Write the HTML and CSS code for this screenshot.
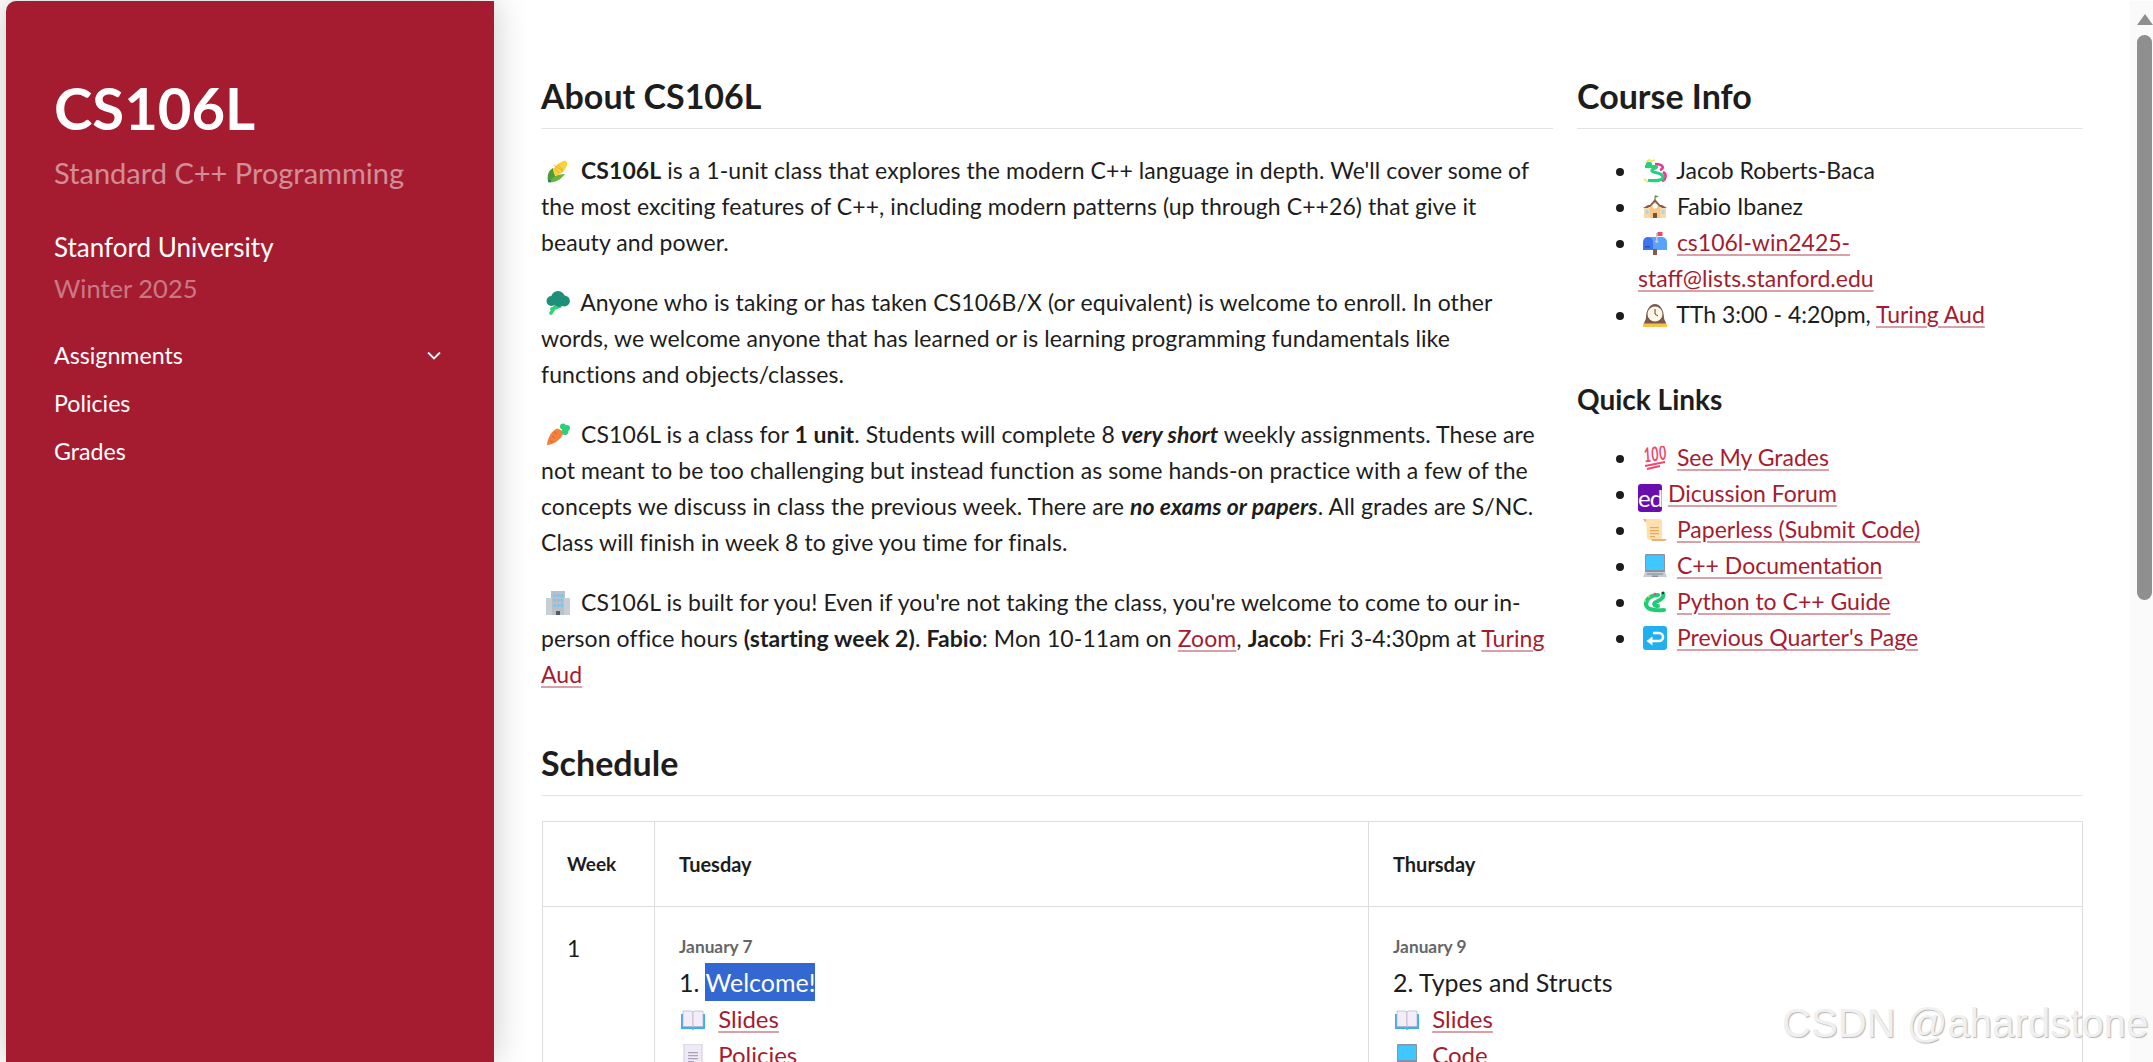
FILE: index.html
```html
<!DOCTYPE html>
<html lang="en">
<head>
<meta charset="utf-8">
<title>CS106L</title>
<link rel="stylesheet" href="styles.css">
</head>
<body>
<svg class="defs" aria-hidden="true">
  <symbol id="corn" viewBox="0 0 24 24">
    <path d="M5 13c2-4 7-9 12-11 3-1 5 1 4 4-1 5-6 9-11 11z" fill="#f7d33c"/>
    <path d="M9 9l4 5M12 6l5 5M8 6l9 6" stroke="#eaa92a" stroke-width=".9" fill="none"/>
    <path d="M2 22c-1-5 0-10 5-13 0 4 1 6 3 9-2 2-5 4-8 4z" fill="#4f9a3a"/>
    <path d="M3 23c4 1 11-1 16-8-4 0-8 1-11 3-2 1-4 3-5 5z" fill="#69b33f"/>
    <circle cx="3.5" cy="22" r="1.6" fill="#2d7d6a"/>
  </symbol>
  <symbol id="broccoli" viewBox="0 0 24 24">
    <path d="M11 13L5 22M6 18l8-3" stroke="#33d17a" stroke-width="3.600" fill="none" stroke-linecap="round"/>
    <circle cx="5.500" cy="10" r="5" fill="#1f8f78"/>
    <circle cx="12" cy="7" r="7" fill="#1f8f78"/>
    <circle cx="18.500" cy="10" r="5.400" fill="#1f8f78"/>
    <circle cx="13" cy="11.500" r="4.400" fill="#1f8f78"/>
  </symbol>
  <symbol id="carrot" viewBox="0 0 24 24">
    <path d="M1 22c0-4 3-13 9-16 3-1 7 2 7 5-3 7-11 11-16 11z" fill="#f4803b"/>
    <path d="M6 13l3 2M8 9l3 2M4 18l3 1" stroke="#d8642a" stroke-width="1" fill="none"/>
    <circle cx="17" cy="3.500" r="3" fill="#2ecf78"/>
    <circle cx="21" cy="5" r="3" fill="#2ecf78"/>
    <circle cx="19" cy="8.500" r="3.400" fill="#2ecf78"/>
  </symbol>
  <symbol id="office" viewBox="0 0 24 24">
    <path d="M5 0h14v24H5z" fill="#b9c0c8"/>
    <path d="M0 7h6v17H0zM18 7h6v17h-6z" fill="#c9ced4"/>
    <path d="M7.500 3h2.500v3H7.500zM11 3h2.500v3H11zM14.500 3h2.500v3h-2.500zM7.500 8h2.500v3H7.500zM11 8h2.500v3H11zM14.500 8h2.500v3h-2.500zM7.500 13h2.500v3H7.500zM11 13h2.500v3H11zM14.500 13h2.500v3h-2.500z" fill="#7cc4f2"/>
    <path d="M10 20h4v4h-4z" fill="#55595e"/>
  </symbol>
  <symbol id="dragon" viewBox="0 0 24 24">
    <path d="M3 3l3-2 3 1 3-1" stroke="#f6e16a" stroke-width="1.800" fill="none"/>
    <path d="M12 5c8 0 10 4 5 6M20 13c4 2 3 8-1 9" stroke="#f0358f" stroke-width="2.600" fill="none"/>
    <path d="M2 7.500h11c3 1-5 2-4 4.500 1 2.500 11 1 11 6 0 4-8 4-15 3.500" stroke="#27cf7f" stroke-width="3.200" fill="none"/>
    <circle cx="6" cy="6" r="3.200" fill="#27cf7f"/>
    <path d="M1 20l4 3" stroke="#f6e16a" stroke-width="1.800"/>
  </symbol>
  <symbol id="school" viewBox="0 0 24 24">
    <path d="M1 12h22v11H1z" fill="#fbd9a5"/>
    <path d="M7 11l5-6 5 6v12H7z" fill="#f5c78a"/>
    <path d="M5 12l7-8 7 8-2 0-5-5-5 5z" fill="#8a5a44"/>
    <path d="M0 13l5-3h3l-3 3zM24 13l-5-3h-3l3 3z" fill="#8a5a44"/>
    <path d="M11.500 1h1v4h-1z" fill="#8a5a44"/><path d="M12 0l4 1.500-4 1.500z" fill="#43b05c"/>
    <circle cx="12" cy="11" r="2.500" fill="#fff"/>
    <path d="M2.500 15h3v4h-3zM18.500 15h3v4h-3z" fill="#a9d7ee"/>
    <path d="M10 18h4v5h-4z" fill="#7b4f38"/>
  </symbol>
  <symbol id="mailbox" viewBox="0 0 24 24">
    <path d="M7 6h12a5 5 0 0 1 5 5v8H8z" fill="#5aa2ff"/>
    <path d="M5 6a5 5 0 0 1 5 5v8H0v-8a5 5 0 0 1 5-5z" fill="#3d74ef"/>
    <path d="M2 15h5v1.500H2z" fill="#2a4fb8"/>
    <path d="M10 18h4v6h-4z" fill="#8a5a44"/>
    <path d="M13 2h1.500v9H13z" fill="#c7c9d1"/><circle cx="13.700" cy="10.500" r="1.500" fill="#c7c9d1"/>
    <path d="M14.500 1h5v4h-5z" fill="#f2476d"/>
  </symbol>
  <symbol id="clock" viewBox="0 0 24 24">
    <path d="M1 21c0-3 2-4 2-6 0-8 4-14 9-14s9 6 9 14c0 2 2 3 2 6z" fill="#7b5a4a"/>
    <circle cx="12" cy="11" r="7.500" fill="#fff7e8"/>
    <path d="M12 6v5l3 2" stroke="#5a4036" stroke-width="1" fill="none"/>
    <path d="M0 20.500h24V24H0z" fill="#f6c24b"/>
  </symbol>
  <symbol id="hundred" viewBox="0 0 24 24">
    <text class="hundred-text" x="1" y="15" textLength="23" lengthAdjust="spacingAndGlyphs" transform="rotate(-8 12 12)">100</text>
    <path d="M2 20l20-4M4 23l13-3" stroke="#f2476d" stroke-width="1.800"/>
  </symbol>
  <symbol id="scroll" viewBox="0 0 24 24">
    <path d="M0 1h5l1 3H2z" fill="#e6b27a"/>
    <path d="M3 1h14a2 2 0 0 1 2 2v17a2 2 0 0 1-2 2H7c-2 0-3-1-3-3z" fill="#fde0ae"/>
    <path d="M7 9h9v1.200H7zM7 12h9v1.200H7zM7 15h9v1.200H7zM7 18h5v1.200H7z" fill="#e5a868"/>
    <path d="M8 21h16l-2 2H9z" fill="#e6b27a"/>
  </symbol>
  <symbol id="laptop" viewBox="0 0 24 24">
    <path d="M3 0h18a1 1 0 0 1 1 1v17H2V1a1 1 0 0 1 1-1z" fill="#8a93a6"/>
    <path d="M3 1.500h18V16H3z" fill="#3fc8ff"/>
    <path d="M2 18h20l2 5H0z" fill="#c8ccd2"/>
    <path d="M4 19h16v2H4z" fill="#a3a8b0"/><path d="M9 21.500h6V23H9z" fill="#8b9098"/>
  </symbol>
  <symbol id="snake" viewBox="0 0 24 24">
    <path d="M15 5C8 5 3 9 3 14s7 7 18 6" stroke="#1fcc78" stroke-width="4.200" fill="none" stroke-linecap="round"/>
    <path d="M20 3.500c2 4-3 6.500-7 8.500-3 1.500-2 4 2 4" stroke="#1fcc78" stroke-width="4" fill="none" stroke-linecap="round"/>
    <circle cx="12" cy="4" r="1.200" fill="#f2476d"/>
    <circle cx="20" cy="3" r="1.200" fill="#17452f"/>
    <circle cx="2" cy="11" r="1" fill="#d9e23f"/><circle cx="6" cy="6.500" r="1" fill="#d9e23f"/>
  </symbol>
  <symbol id="back" viewBox="0 0 24 24">
    <rect width="24" height="24" rx="3" fill="#20b0f0"/>
    <path d="M10 7h6a4 4 0 0 1 0 8H6" stroke="#fff" stroke-width="2.600" fill="none"/>
    <path d="M9.500 10.500v9l-6-4.500z" fill="#fff"/>
  </symbol>
  <symbol id="book" viewBox="0 0 24 24">
    <path d="M0 6h24v15H13l-1 1.500-1-1.500H0z" fill="#39b0ef"/>
    <path d="M2 3h9l1 1v15l-1-.500H2z" fill="#f3edf9" stroke="#b5b0c4" stroke-width=".7"/>
    <path d="M22 3h-9l-1 1v15l1-.500h9z" fill="#f3edf9" stroke="#b5b0c4" stroke-width=".7"/>
  </symbol>
  <symbol id="doc" viewBox="0 0 24 24">
    <path d="M3 0h18v24H3z" fill="#efeaf5" stroke="#cfcada" stroke-width="1"/>
    <path d="M7 8h10v1.200H7zM7 11h10v1.200H7zM7 14h10v1.200H7zM7 17h6v1.200H7z" fill="#a9a3b8"/>
  </symbol>
</svg>

<div class="app">
  <aside class="sidebar">
    <h1 class="site-title">CS106L</h1>
    <p class="site-sub">Standard C++ Programming</p>
    <p class="site-org">Stanford University</p>
    <p class="site-term">Winter 2025</p>
    <nav class="nav">
      <a class="nav-item" href="#"><span>Assignments</span>
        <svg class="chevron" viewBox="0 0 14 9"><path d="M1 1.500l6 6 6-6" fill="none" stroke="#fff" stroke-width="1.800"/></svg>
      </a>
      <a class="nav-item" href="#">Policies</a>
      <a class="nav-item" href="#">Grades</a>
    </nav>
  </aside>

  <main class="main">
    <div class="columns">
      <section class="about">
        <h2 class="section-title">About CS106L</h2>
        <p class="para"><svg class="emoji"><use href="#corn"/></svg> <strong>CS106L</strong> is a 1-unit class that explores the modern C++ language in depth. We'll cover some of the most exciting features of C++, including modern patterns (up through C++26) that give it beauty and power.</p>
        <p class="para"><svg class="emoji"><use href="#broccoli"/></svg> Anyone who is taking or has taken CS106B/X (or equivalent) is welcome to enroll. In other words, we welcome anyone that has learned or is learning programming fundamentals like functions and objects/classes.</p>
        <p class="para"><svg class="emoji"><use href="#carrot"/></svg> CS106L is a class for <strong>1 unit</strong>. Students will complete 8 <strong><em>very short</em></strong> weekly assignments. These are not meant to be too challenging but instead function as some hands-on practice with a few of the concepts we discuss in class the previous week. There are <strong><em>no exams or papers</em></strong>. All grades are S/NC. Class will finish in week 8 to give you time for finals.</p>
        <p class="para"><svg class="emoji"><use href="#office"/></svg> CS106L is built for you! Even if you're not taking the class, you're welcome to come to our in-person office hours <strong>(starting week 2)</strong>. <strong>Fabio</strong>: Mon 10-11am on <a href="#">Zoom</a>, <strong>Jacob</strong>: Fri 3-4:30pm at <a href="#">Turing Aud</a></p>
      </section>
      <section class="info">
        <h2 class="section-title">Course Info</h2>
        <ul class="info-list">
          <li><svg class="emoji"><use href="#dragon"/></svg> Jacob Roberts-Baca</li>
          <li><svg class="emoji"><use href="#school"/></svg> Fabio Ibanez</li>
          <li><svg class="emoji"><use href="#mailbox"/></svg> <a href="#">cs106l-win2425-staff@lists.stanford.edu</a></li>
          <li><svg class="emoji"><use href="#clock"/></svg> TTh 3:00 - 4:20pm, <a href="#">Turing Aud</a></li>
        </ul>
        <h3 class="sub-title">Quick Links</h3>
        <ul class="info-list">
          <li><svg class="emoji"><use href="#hundred"/></svg> <a href="#">See My Grades</a></li>
          <li><span class="ed-logo">ed</span> <a href="#">Dicussion Forum</a></li>
          <li><svg class="emoji"><use href="#scroll"/></svg> <a href="#">Paperless (Submit Code)</a></li>
          <li><svg class="emoji"><use href="#laptop"/></svg> <a href="#">C++ Documentation</a></li>
          <li><svg class="emoji"><use href="#snake"/></svg> <a href="#">Python to C++ Guide</a></li>
          <li><svg class="emoji"><use href="#back"/></svg> <a href="#">Previous Quarter's Page</a></li>
        </ul>
      </section>
    </div>

    <section class="schedule">
      <h2 class="section-title">Schedule</h2>
      <table class="table">
        <thead>
          <tr><th class="col-week">Week</th><th class="col-day">Tuesday</th><th class="col-day">Thursday</th></tr>
        </thead>
        <tbody>
          <tr>
            <td>1</td>
            <td>
              <div class="date">January 7</div>
              <div class="lecture">1. <span class="selected">Welcome!</span></div>
              <div class="res"><svg class="emoji"><use href="#book"/></svg> <a href="#">Slides</a></div>
              <div class="res"><svg class="emoji"><use href="#doc"/></svg> <a href="#">Policies</a></div>
            </td>
            <td>
              <div class="date">January 9</div>
              <div class="lecture">2. Types and Structs</div>
              <div class="res"><svg class="emoji"><use href="#book"/></svg> <a href="#">Slides</a></div>
              <div class="res"><svg class="emoji"><use href="#laptop"/></svg> <a href="#">Code</a></div>
            </td>
          </tr>
        </tbody>
      </table>
    </section>
  </main>

  <div class="scrollbar">
    <span class="scroll-arrow"></span>
    <span class="scroll-thumb"></span>
  </div>
</div>
<div class="watermark">CSDN @ahardstone</div>
</body>
</html>
```

FILE: styles.css
```css
* { box-sizing: border-box; }
html, body { margin: 0; height: 100%; overflow: hidden; background: #fff; }
body {
  font-family: "Lato", "Noto Sans", sans-serif;
  font-size: 23px;
  line-height: 36px;
  letter-spacing: .08px;
  color: #1d1d1d;
}
.defs { position: absolute; width: 0; height: 0; }
.app {
  display: flex;
  height: 1062px;
  padding: 1px 0 0 6px;
}
.sidebar {
  flex: 0 0 488px;
  background: #a51c30;
  border-top-left-radius: 10px;
  box-shadow: 0 0 34px rgba(0, 0, 0, .22);
  padding: 76px 53px 0 48px;
  color: #fff;
  position: relative;
  z-index: 1;
}
.site-title { margin: 0; font-size: 58px; line-height: 62px; font-weight: 700; letter-spacing: 0; }
.site-sub { margin: 15px 0 0; font-size: 29px; line-height: 38px; color: rgba(255, 255, 255, .5); letter-spacing: 0; }
.site-org { margin: 35px 0 0; font-size: 26px; line-height: 41px; letter-spacing: 0; }
.site-term { margin: 0; font-size: 25.500px; line-height: 41px; color: rgba(255, 255, 255, .42); letter-spacing: 0; }
.nav { margin-top: 22px; display: flex; flex-direction: column; }
.nav-item {
  display: flex; justify-content: space-between; align-items: center;
  color: #fff; text-decoration: none; height: 48px; font-size: 23.200px; letter-spacing: 0;
}
.chevron { width: 14px; height: 9px; }

.main { flex: 1; min-width: 0; padding: 0 47px; overflow: hidden; }
.columns { display: grid; grid-template-columns: 2fr 1fr; column-gap: 24px; padding-top: 75px; }
.section-title {
  margin: 0 0 23px;
  font-size: 34px; line-height: 40px; font-weight: 700;
  padding-bottom: 12px;
  border-bottom: 1px solid #e3e3e3;
  color: #1d1d1d;
  letter-spacing: 0;
}
.sub-title { margin: 49px 0 22px; font-size: 28px; line-height: 36px; font-weight: 700; letter-spacing: 0; }
.para { margin: 0 0 24px; padding-right: 6px; }
a { color: #a51c30; text-decoration: underline; text-decoration-color: rgba(165, 28, 48, .42); text-decoration-thickness: 2px; text-underline-offset: 3px; }
.emoji { display: inline-block; width: 24px; height: 24px; vertical-align: -4px; margin: 0 5px 0 5px; }
.info-list { margin: 0; padding-left: 61px; letter-spacing: 0; }
.info-list li { height: auto; }
.info-list .emoji { margin-right: 4px; }
.ed-logo {
  display: inline-block; width: 24px; height: 28px; margin: -4px 0; line-height: 28px; text-align: center;
  background: #6a0dad; color: #fff; border-radius: 3px; font-size: 24px; letter-spacing: -1px; vertical-align: -5px;
}
.hundred-text { font: italic 700 20px "Lato", sans-serif; fill: #f2476d; }

.schedule { margin-top: 27px; }
.table { border-collapse: collapse; width: 1541px; table-layout: fixed; margin: 25px 0 0 1px; }
.table th, .table td { border: 1px solid #ddd; padding: 0 24px; text-align: left; vertical-align: top; }
.table th { height: 85px; vertical-align: middle; font-size: 20px; font-weight: 700; letter-spacing: 0; }
.table th.col-week { font-size: 19px; }
.table td { padding-top: 23px; height: 300px; }
.col-week { width: 112px; }
.col-day { width: 714px; }
.date { font-size: 17.300px; font-weight: 700; color: #666; line-height: 33px; letter-spacing: 0; }
.lecture { font-size: 25px; line-height: 38px; letter-spacing: 0; }
.selected { background: #3367d1; color: #fff; padding: 4px 0; }
.res { line-height: 36px; font-size: 24px; letter-spacing: 0; }
.res .emoji { margin: 0 7px 0 2px; }

.scrollbar { flex: 0 0 23px; background: #fafafa; position: relative; display: flex; flex-direction: column; align-items: center; padding-left: 6px; }
.scroll-arrow {
  margin-top: 13px; width: 0; height: 0;
  border-left: 8px solid transparent; border-right: 8px solid transparent; border-bottom: 11px solid #8f8f8f;
}
.scroll-thumb { margin-top: 10px; width: 15px; height: 565px; background: #8f8f8f; border-radius: 8px; }

.watermark {
  position: absolute; left: 1782px; top: 998px; white-space: nowrap;
  font-family: "Liberation Sans", sans-serif; font-size: 40px; line-height: 50px;
  color: #f0f0f0; text-shadow: 1px 1px 1px #b5b5b5;
}
```
